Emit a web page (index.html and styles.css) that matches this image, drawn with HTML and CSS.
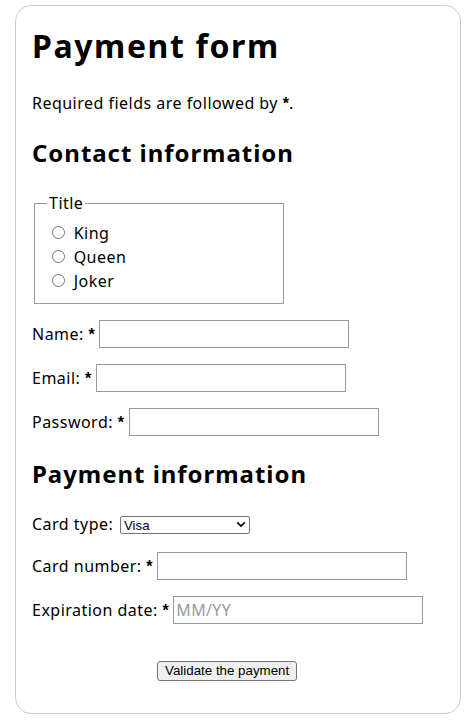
FILE: index.html
```html
<!DOCTYPE html>
<html lang="en">
<head>
<meta charset="utf-8">
<title>Payment form</title>
<link rel="stylesheet" href="styles.css">
</head>
<body class="page">
<form class="payment-form">
  <h1 class="form-title">Payment form</h1>
  <p class="note">Required fields are followed by <strong class="req"><span aria-label="required">*</span></strong>.</p>
  <section class="form-section">
    <h2 class="section-title">Contact information</h2>
    <fieldset class="title-group">
      <legend class="title-legend">Title</legend>
      <ul class="choice-list">
        <li class="choice"><input class="radio" type="radio" id="title_1" name="title" value="K"> <label for="title_1">King</label></li>
        <li class="choice"><input class="radio" type="radio" id="title_2" name="title" value="Q"> <label for="title_2">Queen</label></li>
        <li class="choice"><input class="radio" type="radio" id="title_3" name="title" value="J"> <label for="title_3">Joker</label></li>
      </ul>
    </fieldset>
    <p class="row"><label class="row-label" for="name"><span>Name: </span><strong class="req">*</strong></label> <input class="text-input" type="text" id="name" name="username"></p>
    <p class="row"><label class="row-label" for="mail"><span>Email: </span><strong class="req">*</strong></label> <input class="text-input" type="email" id="mail" name="usermail"></p>
    <p class="row"><label class="row-label" for="pwd"><span>Password: </span><strong class="req">*</strong></label> <input class="text-input" type="password" id="pwd" name="password"></p>
  </section>
  <section class="form-section">
    <h2 class="section-title">Payment information</h2>
    <p class="row"><label class="row-label" for="card"><span>Card type:</span></label> <span class="select-wrap"><select class="card-select" id="card" name="usercard">
          <option value="visa">Visa</option>
          <option value="mc">Mastercard</option>
          <option value="amex">American Express</option>
        </select><svg class="select-arrow" width="10" height="7" viewBox="0 0 10 7" aria-hidden="true"><path d="M1.2 1.3l3.8 3.8 3.8-3.8" fill="none" stroke="#000" stroke-width="1.8"/></svg></span></p>
    <p class="row"><label class="row-label" for="number"><span>Card number: </span><strong class="req">*</strong></label> <input class="text-input" type="tel" id="number" name="cardnumber"></p>
    <p class="row"><label class="row-label" for="expiration"><span>Expiration date: </span><strong class="req">*</strong></label> <input class="text-input" type="tel" id="expiration" name="expiration" placeholder="MM/YY"></p>
  </section>
  <section class="form-section">
    <p class="submit-row"><button class="submit-btn" type="submit">Validate the payment</button></p>
  </section>
</form>
</body>
</html>
```
FILE: styles.css
```css
.page {
  margin: 5px 8px 8px;
  font-family: "Noto Sans", "Open Sans", sans-serif;
  font-size: 16px;
  line-height: 1.5;
  color: #000;
  background: #fff;
  letter-spacing: 0.03em;
}

.payment-form {
  width: 412px;
  margin: 0 auto;
  padding: 16px;
  border: 1px solid #ccc;
  border-radius: 16px;
}

.form-title {
  margin: 0 0 21.44px;
  font-size: 32px;
  line-height: 48px;
  font-weight: 700;
  letter-spacing: 0.05em;
}

.note {
  margin: 16px 0;
}

.req {
  font-family: "Liberation Sans", Arial, sans-serif;
  font-weight: 700;
  line-height: 1;
  letter-spacing: 0;
}

.section-title {
  margin: 19.92px 0;
  font-size: 24px;
  line-height: 36px;
  font-weight: 700;
  letter-spacing: 0.04em;
}

.title-group {
  width: 250px;
  box-sizing: border-box;
  margin: 0 2px;
  padding: 5.6px 12px 10px;
  border: 1px solid #999;
}

.title-legend {
  padding: 0 2px;
}

.choice-list {
  margin: 0;
  padding: 0;
  list-style: none;
}

.choice {
  height: 24px;
}

.radio {
  width: 13px;
  height: 13px;
  margin: 3px 4px 0 5px;
}

.row {
  margin: 16px 0;
}

.text-input {
  width: 250px;
  height: 28px;
  box-sizing: border-box;
  padding: 1px 2px;
  border: 1px solid #999;
  border-radius: 0;
  font: 16px "Noto Sans", "Open Sans", sans-serif;
  letter-spacing: 0.02em;
  background: #fff;
}

.text-input::placeholder {
  color: #9a9a9a;
}

.select-wrap {
  position: relative;
  display: inline-block;
  vertical-align: middle;
  height: 18px;
  margin-left: 2px;
  letter-spacing: 0;
}

.card-select {
  appearance: none;
  -webkit-appearance: none;
  display: block;
  width: 130px;
  height: 18px;
  box-sizing: border-box;
  margin: 0;
  padding: 0 0 0 3px;
  border: 1px solid #767676;
  border-radius: 2px;
  background: #fff;
  color: #000;
  font: 13.33px "Liberation Sans", Arial, sans-serif;
}

.select-arrow {
  position: absolute;
  right: 4px;
  top: 5px;
  pointer-events: none;
}

.submit-row {
  margin: 16px 0;
}

.submit-btn {
  height: 20px;
  box-sizing: border-box;
  margin: 21px 0 0 125px;
  padding: 0 7px;
  border: 1px solid #767676;
  border-radius: 3px;
  background: #efefef;
  color: #000;
  font: 13.33px "Liberation Sans", Arial, sans-serif;
  letter-spacing: 0;
}
```
